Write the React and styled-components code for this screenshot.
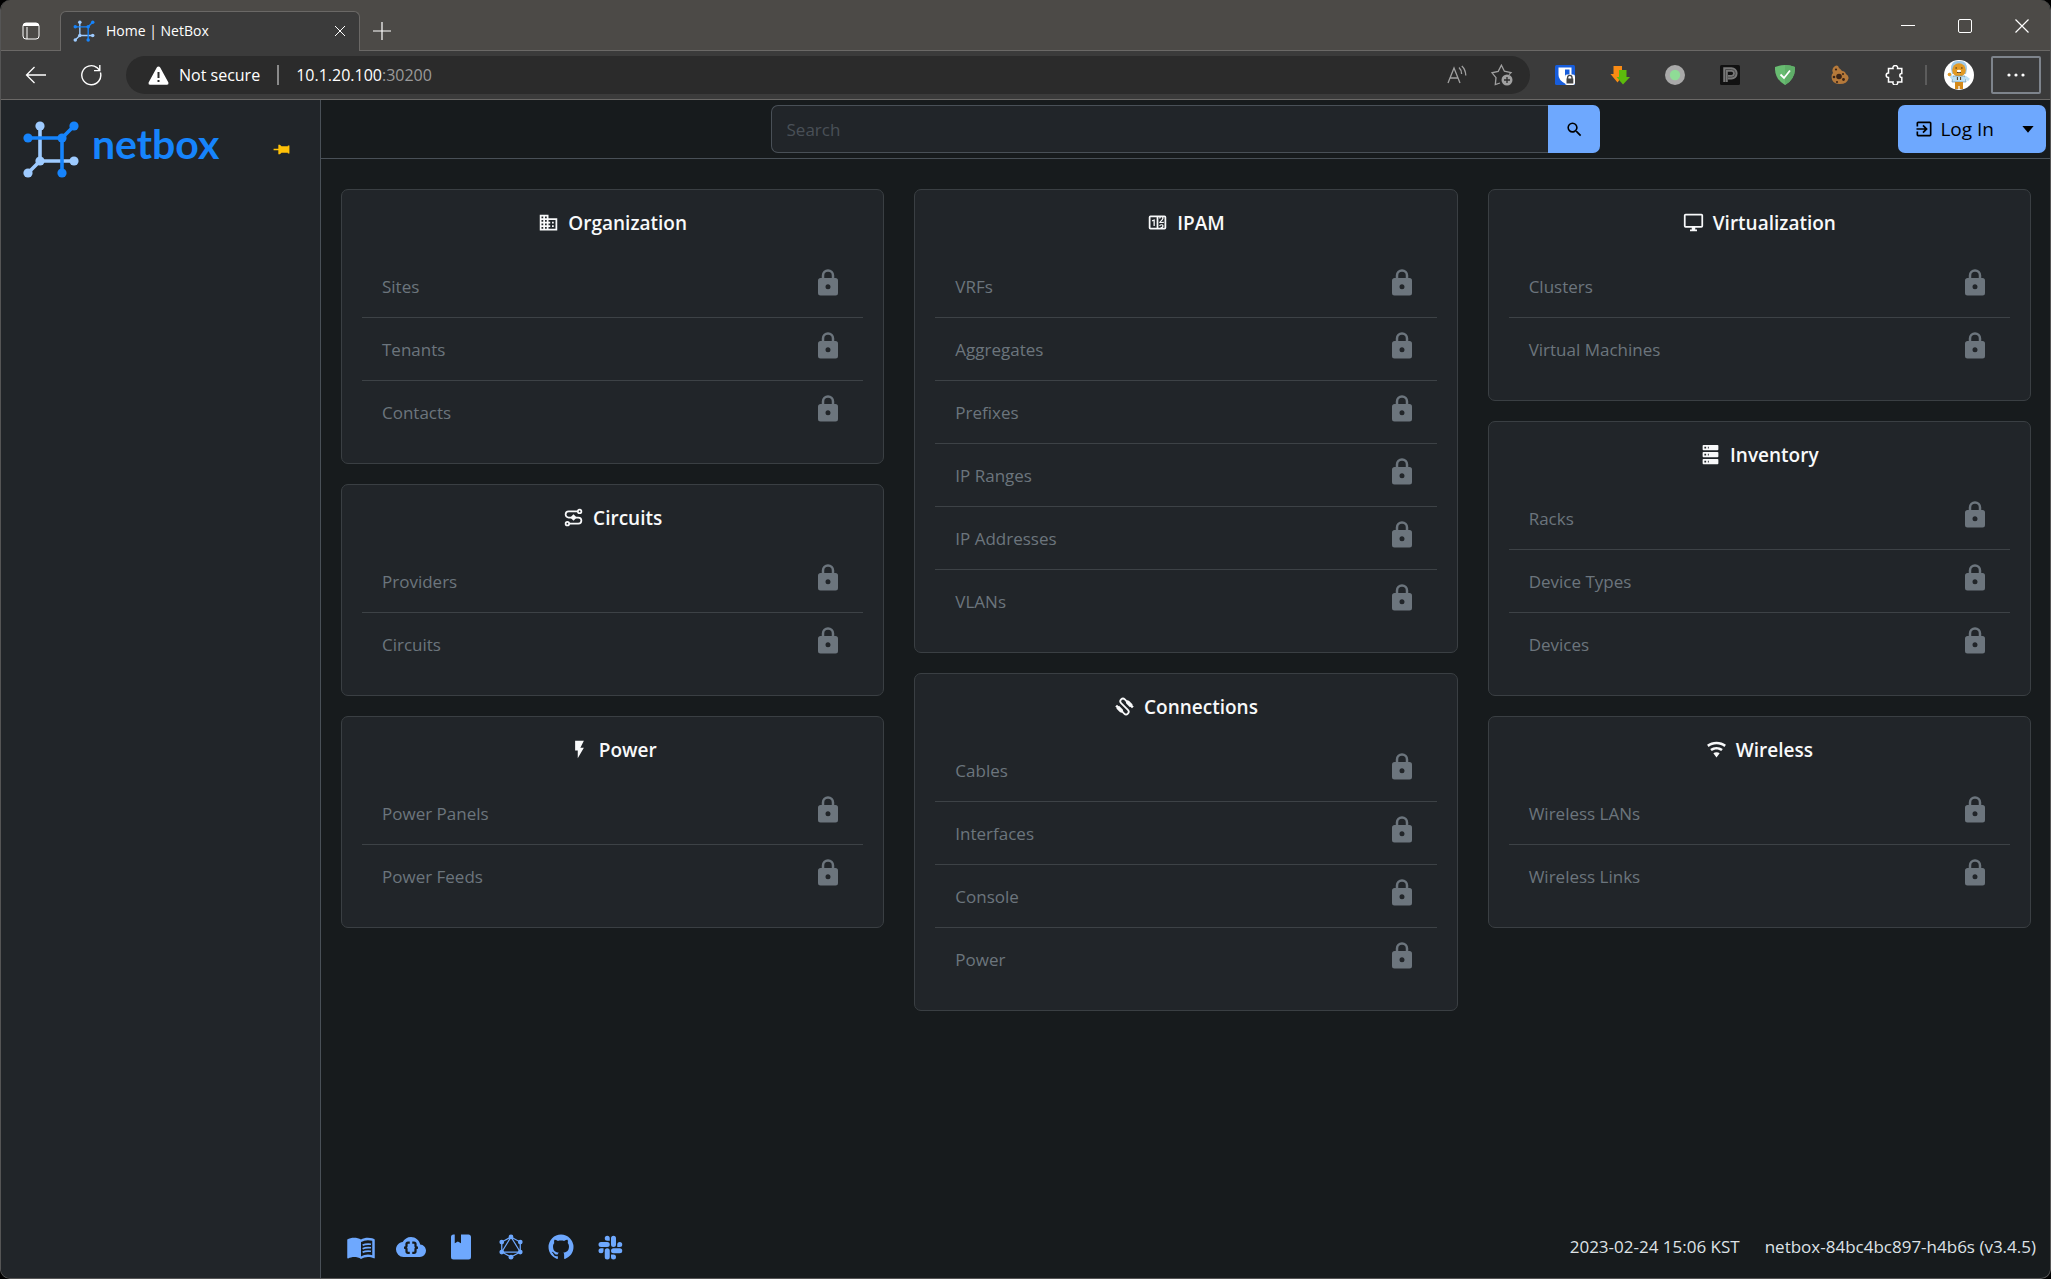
import styled, { createGlobalStyle } from 'styled-components';

const icons = {
  domain:
    'M18,15H16V17H18M18,11H16V13H18M20,19H12V17H14V15H12V13H14V11H12V9H20M10,7H8V5H10M10,11H8V9H10M10,15H8V13H10M10,19H8V17H10M6,7H4V5H6M6,11H4V9H6M6,15H4V13H6M6,19H4V17H6M12,7V3H2V21H22V7H12Z',
  counter:
    'M4,4H20A2,2 0 0,1 22,6V18A2,2 0 0,1 20,20H4A2,2 0 0,1 2,18V6A2,2 0 0,1 4,4M4,6V18H11V6H4M20,18V6H18.76C19,6.54 18.95,7.07 18.95,7.13C18.88,7.8 18.41,8.5 18.24,8.75L15.91,11.3L19.23,11.28L19.24,12.5L14.04,12.47L14,11.47C14,11.47 17.05,8.24 17.2,7.95C17.34,7.67 17.91,6 16.5,6C15.27,6.05 15.41,7.3 15.41,7.3L13.87,7.31C13.87,7.31 13.88,6.65 14.25,6H13V18H15.58L15.57,17.14L16.54,17.13C16.54,17.13 17.45,16.97 17.46,16.08C17.5,15.08 16.65,15.08 16.5,15.08C16.37,15.08 15.43,15.13 15.43,15.95H13.91C13.91,15.95 13.95,13.89 16.5,13.89C19.1,13.89 18.96,15.91 18.96,15.91C18.96,15.91 19,17.16 17.85,17.63L18.37,18H20M8.92,16H7.42V10.2L5.62,10.76V9.53L8.76,8.41H8.92V16Z',
  monitor:
    'M21,16H3V4H21M21,2H3C1.89,2 1,2.89 1,4V16A2,2 0 0,0 3,18H10V20H8V22H16V20H14V18H21A2,2 0 0,0 23,16V4C23,2.89 22.1,2 21,2Z',
  server:
    'M4,1H20A1,1 0 0,1 21,2V6A1,1 0 0,1 20,7H4A1,1 0 0,1 3,6V2A1,1 0 0,1 4,1M4,9H20A1,1 0 0,1 21,10V14A1,1 0 0,1 20,15H4A1,1 0 0,1 3,14V10A1,1 0 0,1 4,9M4,17H20A1,1 0 0,1 21,18V22A1,1 0 0,1 20,23H4A1,1 0 0,1 3,22V18A1,1 0 0,1 4,17M9,5H10V3H9V5M9,13H10V11H9V13M9,21H10V19H9V21M5,3V5H7V3H5M5,11V13H7V11H5M5,19V21H7V19H5Z',
  wifi:
    'M12,21L15.6,16.2C14.6,15.45 13.35,15 12,15C10.65,15 9.4,15.45 8.4,16.2L12,21M12,3C7.95,3 4.21,4.34 1.2,6.6L3,9C5.5,7.12 8.62,6 12,6C15.38,6 18.5,7.12 21,9L22.8,6.6C19.79,4.34 16.05,3 12,3M12,9C9.3,9 6.81,9.89 4.8,11.4L6.6,13.8C8.1,12.67 9.97,12 12,12C14.03,12 15.9,12.67 17.4,13.8L19.2,11.4C17.19,9.89 14.7,9 12,9Z',
  flash: 'M7,2V13H10V22L17,10H13L17,2H7Z',
  lock:
    'M12,17A2,2 0 0,0 14,15C14,13.89 13.1,13 12,13A2,2 0 0,0 10,15A2,2 0 0,0 12,17M18,8A2,2 0 0,1 20,10V20A2,2 0 0,1 18,22H6A2,2 0 0,1 4,20V10C4,8.89 4.9,8 6,8H7V6A5,5 0 0,1 12,1A5,5 0 0,1 17,6V8H18M12,3A3,3 0 0,0 9,6V8H15V6A3,3 0 0,0 12,3Z',
  login:
    'M19,3H5C3.89,3 3,3.89 3,5V9H5V5H19V19H5V15H3V19A2,2 0 0,0 5,21H19A2,2 0 0,0 21,19V5C21,3.89 20.1,3 19,3M10.08,15.58L11.5,17L16.5,12L11.5,7L10.08,8.41L12.67,11H3V13H12.67L10.08,15.58Z',
  magnify:
    'M9.5,3A6.5,6.5 0 0,1 16,9.5C16,11.11 15.41,12.59 14.44,13.73L14.71,14H15.5L20.5,19L19,20.5L14,15.5V14.71L13.73,14.44C12.59,15.41 11.11,16 9.5,16A6.5,6.5 0 0,1 3,9.5A6.5,6.5 0 0,1 9.5,3M9.5,5C7,5 5,7 5,9.5C5,12 7,14 9.5,14C12,14 14,12 14,9.5C14,7 12,5 9.5,5Z',
  caret: 'M4.5,8H19.5L12,17Z',
  book:
    'M18,22A2,2 0 0,0 20,20V4C20,2.89 19.1,2 18,2H12V9L9.5,7.5L7,9V2H6A2,2 0 0,0 4,4V20A2,2 0 0,0 6,22H18Z',
  github:
    'M12,2A10,10 0 0,0 2,12C2,16.42 4.87,20.17 8.84,21.5C9.34,21.58 9.5,21.27 9.5,21C9.5,20.77 9.5,20.14 9.5,19.31C6.73,19.91 6.14,17.97 6.14,17.97C5.68,16.81 5.03,16.5 5.03,16.5C4.12,15.88 5.1,15.9 5.1,15.9C6.1,15.97 6.63,16.93 6.63,16.93C7.5,18.45 8.97,18 9.54,17.76C9.63,17.11 9.89,16.67 10.17,16.42C7.95,16.17 5.62,15.31 5.62,11.5C5.62,10.39 6,9.5 6.65,8.79C6.55,8.54 6.2,7.5 6.75,6.15C6.75,6.15 7.59,5.88 9.5,7.17C10.29,6.95 11.15,6.84 12,6.84C12.85,6.84 13.71,6.95 14.5,7.17C16.41,5.88 17.25,6.15 17.25,6.15C17.8,7.5 17.45,8.54 17.35,8.79C18,9.5 18.38,10.39 18.38,11.5C18.38,15.32 16.04,16.16 13.81,16.41C14.17,16.72 14.5,17.33 14.5,18.26C14.5,19.6 14.5,20.68 14.5,21C14.5,21.27 14.66,21.59 15.17,21.5C19.14,20.16 22,16.42 22,12A10,10 0 0,0 12,2Z',
  slack:
    'M6,15A2,2 0 0,1 4,17A2,2 0 0,1 2,15A2,2 0 0,1 4,13H6V15M7,15A2,2 0 0,1 9,13A2,2 0 0,1 11,15V20A2,2 0 0,1 9,22A2,2 0 0,1 7,20V15M9,7A2,2 0 0,1 7,5A2,2 0 0,1 9,3A2,2 0 0,1 11,5V7H9M9,8A2,2 0 0,1 11,10A2,2 0 0,1 9,12H4A2,2 0 0,1 2,10A2,2 0 0,1 4,8H9M17,10A2,2 0 0,1 19,8A2,2 0 0,1 21,10A2,2 0 0,1 19,12H17V10M16,10A2,2 0 0,1 14,12A2,2 0 0,1 12,10V5A2,2 0 0,1 14,3A2,2 0 0,1 16,5V10M14,18A2,2 0 0,1 16,20A2,2 0 0,1 14,22A2,2 0 0,1 12,20V18H14M14,17A2,2 0 0,1 12,15A2,2 0 0,1 14,13H19A2,2 0 0,1 21,15A2,2 0 0,1 19,17H14Z',
};

const columns = [
  [
    { title: 'Organization', icon: 'domain', items: ['Sites', 'Tenants', 'Contacts'] },
    { title: 'Circuits', icon: 'transit', items: ['Providers', 'Circuits'] },
    { title: 'Power', icon: 'flash', items: ['Power Panels', 'Power Feeds'] },
  ],
  [
    {
      title: 'IPAM',
      icon: 'counter',
      items: ['VRFs', 'Aggregates', 'Prefixes', 'IP Ranges', 'IP Addresses', 'VLANs'],
    },
    {
      title: 'Connections',
      icon: 'cable',
      items: ['Cables', 'Interfaces', 'Console', 'Power'],
    },
  ],
  [
    { title: 'Virtualization', icon: 'monitor', items: ['Clusters', 'Virtual Machines'] },
    { title: 'Inventory', icon: 'server', items: ['Racks', 'Device Types', 'Devices'] },
    { title: 'Wireless', icon: 'wifi', items: ['Wireless LANs', 'Wireless Links'] },
  ],
];

export default function App() {
  return (
    <Window>
      <GlobalStyle />
      <TabStrip />
      <Toolbar />
      <Page>
        <Sidebar>
          <Brand href="#" aria-label="NetBox home">
            <NetboxMark size={58} />
            <BrandName>netbox</BrandName>
          </Brand>
          <PlainButton aria-label="Pin sidebar">
            <svg width="19" height="19" viewBox="0 0 24 24" fill="#ffc107">
              <path
                transform="rotate(90 12 12)"
                d="M16,12V4H17V2H7V4H8V12L6,14V16H11.2V22H12.8V16H18V14L16,12Z"
              />
            </svg>
          </PlainButton>
        </Sidebar>
        <Main>
          <Header>
            <Search role="search">
              <SearchInput type="search" placeholder="Search" aria-label="Search" />
              <SearchButton aria-label="Search">
                <Icon name="magnify" size={19} />
              </SearchButton>
            </Search>
            <Login>
              <LoginLink href="#">
                <Icon name="login" size={20} />
                Log In
              </LoginLink>
              <LoginToggle aria-label="Login options">
                <Icon name="caret" size={18} />
              </LoginToggle>
            </Login>
          </Header>
          <Columns>
            {columns.map((cards, index) => (
              <Column key={index}>
                {cards.map((card) => (
                  <StatCard key={card.title} {...card} />
                ))}
              </Column>
            ))}
          </Columns>
          <Footer>
            <FooterLinks>
              <FooterLink href="#" aria-label="Docs">
                <Icon name="docs" size={30} />
              </FooterLink>
              <FooterLink href="#" aria-label="REST API">
                <Icon name="cloud" size={30} />
              </FooterLink>
              <FooterLink href="#" aria-label="REST API documentation">
                <Icon name="book" size={30} />
              </FooterLink>
              <FooterLink href="#" aria-label="GraphQL API">
                <Icon name="graphql" size={30} />
              </FooterLink>
              <FooterLink href="#" aria-label="Source code">
                <Icon name="github" size={30} />
              </FooterLink>
              <FooterLink href="#" aria-label="Community">
                <Icon name="slack" size={30} />
              </FooterLink>
            </FooterLinks>
            <FooterInfo>
              <span>2023-02-24 15:06 KST</span>
              <span>netbox-84bc4bc897-h4b6s (v3.4.5)</span>
            </FooterInfo>
          </Footer>
        </Main>
      </Page>
    </Window>
  );
}

function StatCard({ title, icon, items }) {
  return (
    <Card>
      <CardTitle>
        <Icon name={icon} size={21} />
        {title}
      </CardTitle>
      <List>
        {items.map((item) => (
          <Item key={item}>
            {item}
            <Icon name="lock" size={30} />
          </Item>
        ))}
      </List>
    </Card>
  );
}

function TabStrip() {
  return (
    <Strip>
      <StripButton aria-label="Tab actions">
        <svg width="18" height="18" fill="none" stroke="#fff">
          <rect x="1" y="1" width="16" height="16" rx="3" />
          <path d="M1,3.5H17M5,5V17" />
          <path d="M2,2.5H16" strokeWidth="3" />
        </svg>
      </StripButton>
      <Tab>
        <NetboxMark size={22} />
        <TabTitle>Home | NetBox</TabTitle>
        <PlainButton aria-label="Close tab">
          <svg width="12" height="12" stroke="#fff">
            <path d="M1,1L11,11M11,1L1,11" />
          </svg>
        </PlainButton>
      </Tab>
      <NewTab aria-label="New tab">
        <svg width="18" height="18" stroke="#fff" strokeWidth="1.2">
          <path d="M9,0V18M0,9H18" />
        </svg>
      </NewTab>
      <WindowButtons>
        <WindowButton aria-label="Minimize">
          <svg width="14" height="14" stroke="#fff">
            <path d="M0,6.5H14" />
          </svg>
        </WindowButton>
        <WindowButton aria-label="Maximize">
          <svg width="14" height="14" fill="none" stroke="#fff">
            <rect x="0.5" y="0.5" width="13" height="13" rx="1.5" />
          </svg>
        </WindowButton>
        <WindowButton aria-label="Close">
          <svg width="14" height="14" stroke="#fff" strokeWidth="1.2">
            <path d="M0.5,0.5L13.5,13.5M13.5,0.5L0.5,13.5" />
          </svg>
        </WindowButton>
      </WindowButtons>
    </Strip>
  );
}

function Toolbar() {
  return (
    <Bar>
      <NavButton aria-label="Back">
        <svg width="22" height="18" fill="none" stroke="#fff" strokeWidth="1.3">
          <path d="M21,9H1.5M9.5,1L1.5,9L9.5,17" />
        </svg>
      </NavButton>
      <NavButton aria-label="Refresh">
        <svg width="22" height="22" fill="none" stroke="#fff" strokeWidth="1.4">
          <path d="M20.4,8.5A9.5,9.5 0 1,1 17,3.6L19.6,6.2M19.8,1V6.6H14" />
        </svg>
      </NavButton>
      <AddressBar>
        <SecurityButton>
          <svg width="21" height="19" viewBox="0 0 21 19">
            <path
              d="M10.5,0.5Q11.6,0.5 12.2,1.6L20.4,16.4Q21,18.6 19,18.8H2Q0,18.6 0.6,16.4L8.8,1.6Q9.4,0.5 10.5,0.5Z"
              fill="#fff"
            />
            <path d="M10.5,6V12M10.5,14V16" stroke="#2b2b2b" strokeWidth="2" />
          </svg>
          Not secure
        </SecurityButton>
        <AddressDivider />
        <Address>
          <AddressInput aria-label="Address" defaultValue="10.1.20.100" />
          <span>:30200</span>
        </Address>
        <AddressIcons>
          <PlainButton aria-label="Read aloud">
            <svg width="20" height="20" fill="none" stroke="#a0a0a0" strokeWidth="1.3">
              <path d="M1,18L7,3L13,18M3,13H11" />
              <path d="M12,2.6Q14.6,5 14.6,9M14.8,1Q18.6,4.6 18.8,10.4" />
            </svg>
          </PlainButton>
          <PlainButton aria-label="Add to favorites">
            <svg width="22" height="22" fill="none" stroke="#a0a0a0" strokeWidth="1.3">
              <path d="M9,19L4.3,20.6L5,13.6L1,8.8L7.2,7.4L10.4,1.2L13.4,7.2L20,8.6L18,10.6" />
              <circle cx="16" cy="16" r="5.5" fill="#a0a0a0" stroke="none" />
              <path d="M16,13V19M13,16H19" stroke="#2b2b2b" />
            </svg>
          </PlainButton>
        </AddressIcons>
      </AddressBar>
      <Extensions>
        <PlainButton aria-label="Bitwarden">
          <svg width="20" height="20">
            <rect width="20" height="20" rx="1.5" fill="#175ddc" />
            <path d="M3.5,2.5H16.5V10Q16.5,15 10,18.5Q3.5,15 3.5,10Z" fill="#fff" />
            <path d="M10,4.5H14.5V10Q14,12.5 10,15Z" fill="#175ddc" />
            <rect x="10" y="9.5" width="10" height="10.5" rx="2" fill="#fff" />
            <path d="M12.6,14V12.6A2.2,2.2 0 0,1 17,12.6V14" fill="none" stroke="#444" strokeWidth="1.4" />
            <rect x="11.5" y="13.5" width="6.8" height="5" fill="#444" />
          </svg>
        </PlainButton>
        <PlainButton aria-label="Downloader">
          <svg width="20" height="20">
            <path d="M3.5,1H12V9H14L7.5,17.5L0.5,9H3.5Z" fill="#f98b14" />
            <path d="M9,5H16.5V12H20L13,19.5L6.5,12H9Z" fill="#5cbb0c" />
          </svg>
        </PlainButton>
        <PlainButton aria-label="Status">
          <svg width="20" height="20">
            <circle cx="10" cy="10" r="10" fill="#a9a9a9" />
            <circle cx="10" cy="10" r="5.2" fill="#8fdc96" />
          </svg>
        </PlainButton>
        <PlainButton aria-label="Pushbullet">
          <svg width="20" height="20" fill="none">
            <rect width="20" height="20" rx="1.5" fill="#111" />
            <path d="M5.5,17V4.5H11.5A3.8,3.8 0 0,1 11.5,12.2H8" stroke="#777" strokeWidth="4.5" />
            <path d="M5.5,17V4.5H11.5A3.8,3.8 0 0,1 11.5,12.2H8" stroke="#4a4a4a" strokeWidth="1" />
          </svg>
        </PlainButton>
        <PlainButton aria-label="AdGuard">
          <svg width="20" height="20" fill="none">
            <path d="M10,0Q15,0 20,2Q20.5,14 10,20Q-0.5,14 0,2Q5,0 10,0Z" fill="#68bc71" />
            <path d="M10,0Q15,0 20,2Q20.5,14 10,20Z" fill="#5fae68" />
            <path d="M5.5,9.5L9,13L15,5.5" stroke="#fff" strokeWidth="1.8" />
          </svg>
        </PlainButton>
        <PlainButton aria-label="Cookies">
          <svg width="20" height="20">
            <path
              d="M5,1Q8,-0.5 9,3Q11,4.5 12,6Q15,6 16,9Q19,11 18.5,13.5Q17,19 10,19Q2,19.5 1.5,12Q1.5,9 3,8Q1,3.5 5,1Z"
              fill="#b5793a"
            />
            <g fill="#3a2417">
              <circle cx="9" cy="11.5" r="2.8" />
              <circle cx="4" cy="12" r="1.3" />
              <circle cx="13.5" cy="14.5" r="1.4" />
              <circle cx="6" cy="4.5" r="1.1" />
              <circle cx="7" cy="17" r="1.1" />
              <circle cx="13" cy="9" r="1" />
            </g>
          </svg>
        </PlainButton>
        <PlainButton aria-label="Extensions">
          <svg width="20" height="20" fill="none" stroke="#fff" strokeWidth="1.5">
            <path d="M3.5,3.5H8A2.4,2.4 0 1,1 12.6,3.5H16.8V8.4A2,2 0 1,0 16.8,12.4V17H12.6A2.4,2.4 0 1,1 8,17H3.5V12.6A2.3,2.3 0 1,1 3.5,8Z" />
          </svg>
        </PlainButton>
      </Extensions>
      <BarDivider />
      <Profile aria-label="Profile">
        <svg width="30" height="30">
          <circle cx="15" cy="15" r="15" fill="#fff" />
          <path d="M7,9Q7,0 15,1Q23,0 23,9L22,14H8Z" fill="#9fc8e6" />
          <circle cx="15" cy="10" r="6.8" fill="#e29a25" />
          <path d="M9,16H21L22,22H8Z" fill="#bde0f5" stroke="#5b7f99" strokeWidth="0.6" />
          <path d="M5,13L9,19M25,20L21,17" stroke="#bde0f5" strokeWidth="3" />
          <circle cx="5.5" cy="14.5" r="1.8" fill="#e29a25" />
          <path d="M11,22H19V29H15.6V26H14.4V29H11Z" fill="#d48a1c" />
          <g stroke="#4a2f10" strokeWidth="1">
            <path d="M11.4,8H13M17,8H18.6M13,12.4H17M13.4,17V20M16.6,17V20" />
          </g>
          <ellipse cx="15" cy="11" rx="2.2" ry="1.2" fill="#fff" />
        </svg>
      </Profile>
      <MenuButton aria-label="Settings and more">
        <svg width="18" height="4" fill="#fff">
          <circle cx="2" cy="2" r="1.6" />
          <circle cx="9" cy="2" r="1.6" />
          <circle cx="16" cy="2" r="1.6" />
        </svg>
      </MenuButton>
    </Bar>
  );
}

function NetboxMark({ size }) {
  return (
    <svg width={size} height={size} viewBox="0 0 58 58" strokeWidth="3.6">
      <g stroke="#9ecbff" fill="#9ecbff">
        <path d="M18,6V41H52M18,41L6,53" fill="none" />
        <g stroke="none">
          <circle cx="18" cy="6" r="4.6" />
          <circle cx="18" cy="41" r="4.6" />
          <circle cx="52" cy="41" r="4.6" />
          <circle cx="6" cy="53" r="4.6" />
        </g>
      </g>
      <g stroke="#1684fc" fill="#1684fc">
        <path d="M6,18H40V53M40,18L52,6" fill="none" />
        <g stroke="none">
          <circle cx="6" cy="18" r="4.6" />
          <circle cx="40" cy="18" r="4.6" />
          <circle cx="52" cy="6" r="4.6" />
          <circle cx="40" cy="53" r="4.6" />
        </g>
      </g>
    </svg>
  );
}

function Icon({ name, size }) {
  return (
    <svg width={size} height={size} viewBox="0 0 24 24" fill="currentColor" aria-hidden="true">
      {drawings[name] || <path d={icons[name]} />}
    </svg>
  );
}

const drawings = {
  transit: (
    <g fill="none" stroke="currentColor" strokeWidth="2">
      <circle cx="19" cy="5" r="2" />
      <circle cx="5" cy="19" r="2" />
      <path d="M17,5H6.5A3.5,3.5 0 0,0 6.5,12H17.5A3.5,3.5 0 0,1 17.5,19H7" />
      <path d="M12,8.4L15.6,12L12,15.6L8.4,12Z" fill="currentColor" stroke="none" />
    </g>
  ),
  cable: (
    <g transform="rotate(-45 12 12)">
      <path
        d="M6,14V17.5A3,3 0 0,0 12,17.5V6.5A3,3 0 0,1 18,6.5V10"
        fill="none"
        stroke="currentColor"
        strokeWidth="2"
      />
      <path d="M3.8,13V7H4.6V4.5H7.4V7H8.2V13L7,15H5ZM15.8,11L17,9H19L20.2,11V17H19.4V19.5H16.6V17H15.8Z" />
    </g>
  ),
  docs: (
    <>
      <path d="M21,5C19.89,4.65 18.67,4.5 17.5,4.5C15.55,4.5 13.45,4.9 12,6C10.55,4.9 8.45,4.5 6.5,4.5C4.55,4.5 2.45,4.9 1,6V20.65C1,20.9 1.25,21.15 1.5,21.15C1.6,21.15 1.65,21.1 1.75,21.1C3.1,20.45 5.05,20 6.5,20C8.45,20 10.55,20.4 12,21.5C13.35,20.65 15.8,20 17.5,20C19.15,20 20.85,20.3 22.25,21.05C22.35,21.1 22.4,21.1 22.5,21.1C22.75,21.1 23,20.85 23,20.6V6C22.4,5.55 21.75,5.25 21,5M21,18.5C19.9,18.15 18.7,18 17.5,18C15.8,18 13.35,18.65 12,19.5V8C13.35,7.15 15.8,6.5 17.5,6.5C18.7,6.5 19.9,6.65 21,7V18.5Z" />
      <path
        d="M13.3,10.6Q16,9.2 20,9.8M13.3,13.4Q16,12 20,12.6M13.3,16.2Q16,14.8 20,15.4"
        fill="none"
        stroke="currentColor"
        strokeWidth="1.4"
      />
    </>
  ),
  cloud: (
    <>
      <path d="M19.35,10.03C18.67,6.59 15.64,4 12,4C9.11,4 6.6,5.64 5.35,8.03C2.34,8.36 0,10.9 0,14A6,6 0 0,0 6,20H19A5,5 0 0,0 24,15C24,12.36 21.95,10.22 19.35,10.03Z" />
      <path
        d="M11,8.4H9.6Q8.4,8.4 8.4,9.6V11.2Q8.4,12.5 6.4,12.5Q8.4,12.5 8.4,13.8V15.4Q8.4,16.6 9.6,16.6H11M13,8.4H14.4Q15.6,8.4 15.6,9.6V11.2Q15.6,12.5 17.6,12.5Q15.6,12.5 15.6,13.8V15.4Q15.6,16.6 14.4,16.6H13"
        fill="none"
        stroke="#171b1d"
        strokeWidth="1.8"
      />
    </>
  ),
  graphql: (
    <>
      <path
        d="M12,4L19.4,8V16L12,20L4.6,16V8ZM12,4L4.6,16H19.4Z"
        fill="none"
        stroke="currentColor"
        strokeWidth="1"
      />
      <circle cx="12" cy="3.9" r="1.9" />
      <circle cx="19.4" cy="8" r="1.9" />
      <circle cx="19.4" cy="16" r="1.9" />
      <circle cx="12" cy="20.1" r="1.9" />
      <circle cx="4.6" cy="16" r="1.9" />
      <circle cx="4.6" cy="8" r="1.9" />
    </>
  ),
};

const GlobalStyle = createGlobalStyle`
  * {
    box-sizing: border-box;
  }

  body {
    margin: 0;
    background: #000;
    color: #dee2e6;
    font-family: 'Open Sans', 'Noto Sans', sans-serif;
    font-size: 17px;
    line-height: 24px;
  }

  button, input {
    font: inherit;
  }

  svg {
    display: block;
    flex-shrink: 0;
  }
`;

const Window = styled.div`
  min-height: 100vh;
  display: flex;
  flex-direction: column;
  border: 1px solid #555;
  border-top: none;
  border-radius: 10px;
  overflow: hidden;
  background: #171b1d;
`;

const PlainButton = styled.button`
  display: flex;
  align-items: center;
  justify-content: center;
  padding: 0;
  border: none;
  background: none;
  color: inherit;
  cursor: pointer;
`;

const Strip = styled.div`
  height: 51px;
  display: flex;
  align-items: flex-end;
  background: #4c4a47;
  box-shadow: inset 0 -1px #6a6866;
`;

const StripButton = styled(PlainButton)`
  width: 59px;
  height: 40px;
  padding-right: 20px;
  justify-content: flex-end;
`;

const Tab = styled.div`
  width: 300px;
  height: 40px;
  padding: 0 13px 2px 12px;
  display: flex;
  align-items: center;
  gap: 11px;
  border: 1px solid #6a6866;
  border-bottom: none;
  border-radius: 6px 6px 0 0;
  background: #3b3b3b;
`;

const TabTitle = styled.span`
  flex: 1;
  color: #fff;
  font-size: 14px;
`;

const NewTab = styled(PlainButton)`
  width: 44px;
  height: 41px;
`;

const WindowButtons = styled.div`
  height: 51px;
  margin-left: auto;
  display: flex;
`;

const WindowButton = styled(PlainButton)`
  width: 57px;
`;

const Bar = styled.div`
  height: 49px;
  padding: 0 9px 0 7px;
  display: flex;
  align-items: center;
  background: #3b3b3b;
  border-bottom: 1px solid #6a6866;
`;

const NavButton = styled(PlainButton)`
  width: 55px;
  height: 38px;
`;

const AddressBar = styled.div`
  flex: 1;
  height: 38px;
  margin-left: 8px;
  padding: 0 17px 0 22px;
  display: flex;
  align-items: center;
  border-radius: 19px;
  background: #2b2b2b;
  color: #fff;
  font-size: 16px;
`;

const SecurityButton = styled(PlainButton)`
  gap: 10px;
`;

const AddressDivider = styled.span`
  width: 2px;
  height: 20px;
  margin: 0 17px;
  background: #8a8a8a;
`;

const Address = styled.label`
  flex: 1;
  display: flex;
  color: #9a9a9a;
`;

const AddressInput = styled.input`
  field-sizing: content;
  padding: 0;
  border: none;
  outline: none;
  background: none;
  color: #fff;
`;

const AddressIcons = styled.div`
  display: flex;
  gap: 24px;
`;

const Extensions = styled.div`
  margin-left: 25px;
  display: flex;
  gap: 35px;
`;

const BarDivider = styled.span`
  width: 2px;
  height: 20px;
  margin: 0 17px 0 20px;
  background: #5c5c5c;
`;

const Profile = styled(PlainButton)`
  margin-right: 17px;
`;

const MenuButton = styled(PlainButton)`
  width: 50px;
  height: 38px;
  border: 2px solid #7e848c;
  border-radius: 2px;
`;

const Page = styled.div`
  flex: 1;
  display: flex;
`;

const Sidebar = styled.nav`
  width: 320px;
  padding: 20px 29px 0 21px;
  display: flex;
  align-items: flex-start;
  justify-content: space-between;
  background: #212529;
  border-right: 1px solid #495057;

  ${PlainButton} {
    height: 58px;
  }
`;

const Brand = styled.a`
  display: flex;
  align-items: center;
  gap: 12px;
  text-decoration: none;
`;

const BrandName = styled.span`
  padding-bottom: 10px;
  color: #1684fc;
  font-family: Lato, sans-serif;
  font-size: 41px;
  font-weight: 700;
  line-height: 48px;
`;

const Main = styled.main`
  flex: 1;
  min-width: 0;
  display: flex;
  flex-direction: column;
`;

const Header = styled.header`
  padding: 5px 0;
  display: grid;
  grid-template-columns: 1fr 48% 1fr;
  border-bottom: 1px solid #495057;
`;

const Search = styled.form`
  grid-column: 2;
  height: 48px;
  display: flex;
`;

const SearchInput = styled.input`
  flex: 1;
  min-width: 0;
  padding: 2px 15px 0;
  border: 1px solid #495057;
  border-right: none;
  border-radius: 7px 0 0 7px;
  outline: none;
  background: #212529;
  color: #dee2e6;

  &::placeholder {
    color: #495057;
    opacity: 1;
  }
`;

const SearchButton = styled(PlainButton)`
  width: 52px;
  border-radius: 0 7px 7px 0;
  background: #6ea8fe;
  color: #000;
`;

const Login = styled.div`
  margin-right: 4px;
  justify-self: end;
  display: flex;
  border-radius: 7px;
  background: #6ea8fe;
  color: #000;
`;

const LoginLink = styled.a`
  padding-left: 16px;
  display: flex;
  align-items: center;
  gap: 6px;
  color: inherit;
  font-size: 19px;
  text-decoration: none;
`;

const LoginToggle = styled(PlainButton)`
  width: 52px;
  padding-left: 15px;
`;

const Columns = styled.div`
  flex: 1;
  padding: 30px 19px 20px 20px;
  display: grid;
  grid-template-columns: repeat(3, 1fr);
  gap: 30px;
`;

const Column = styled.div`
  display: flex;
  flex-direction: column;
  gap: 20px;
`;

const Card = styled.section`
  padding: 0 20px 19px;
  border: 1px solid #3a3f43;
  border-radius: 7px;
  background: #212529;
`;

const CardTitle = styled.h2`
  height: 65px;
  margin: 0;
  display: flex;
  align-items: center;
  justify-content: center;
  gap: 9px;
  color: #f8f9fa;
  font-size: 19px;
  font-weight: 600;
`;

const List = styled.ul`
  margin: 0;
  padding: 0;
  list-style: none;
`;

const Item = styled.li`
  height: 63px;
  padding: 13px 20px 11px;
  display: flex;
  justify-content: space-between;
  align-items: flex-start;
  border-bottom: 1px solid #3d4246;
  color: #6c757d;
  line-height: 38px;

  &:last-child {
    border-bottom: none;
  }
`;

const Footer = styled.footer`
  padding: 0 14px 16px 25px;
  display: flex;
  align-items: center;
  justify-content: space-between;
`;

const FooterLinks = styled.nav`
  display: flex;
  gap: 20px;
`;

const FooterLink = styled.a`
  color: #6ea8fe;
`;

const FooterInfo = styled.div`
  display: flex;
  gap: 25px;
`;
